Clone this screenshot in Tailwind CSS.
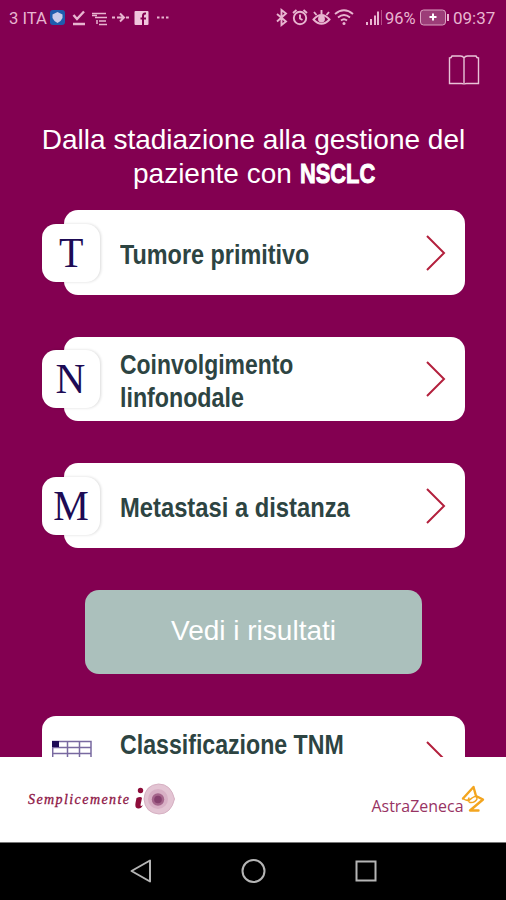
<!DOCTYPE html>
<html lang="it">
<head>
<meta charset="utf-8">
<title>TNM</title>
<script src="https://cdn.jsdelivr.net/npm/@tailwindcss/browser@4"></script>
</head>
<body class="w-[506px] h-[900px] overflow-hidden bg-[#830051] font-['Liberation_Sans',sans-serif] flex flex-col">
<main class="h-[757px] shrink-0 overflow-hidden">
  <header class="h-9 flex items-center text-[#e8b5d0] font-['Roboto',sans-serif] text-[17px] leading-none">
    <span class="ml-[9px] w-[39px] whitespace-nowrap"><span class="inline-block origin-left scale-x-[.98]">3 ITA</span></span>
    <svg class="w-[125px] h-9" viewBox="48 0 125 36" fill="none" stroke="#e8b5d0" stroke-width="2">
      <rect x="50" y="10" width="15" height="15" rx="3" fill="#1e5cae" stroke="none"/><path d="M52.500 14.500L57.500 12L62.500 14.500V18Q61 21.500 57.500 23Q54 21.500 52.500 18Z" fill="#c9cbea" stroke="none"/>
      <path d="M73.500 15L77 19L84 11.500M73 24H85" stroke-width="2.400"/>
      <path d="M92 13.500H106M95 17.500H107M92 15.500H97M99 21H106M99 24.500H107M97 20V24" stroke-width="1.500"/>
      <path d="M112 17.500H115M117 17.500H124M126 17.500H129M120 13.500L124 17.500L120 21.500"/>
      <rect x="134.500" y="11" width="14" height="14" rx="1" fill="#f0c5dc" stroke="none"/><path d="M146 13.500H145Q143 13.500 143 16V25M140.500 18.500H146" stroke="#830051"/>
      <path d="M157 17.500H159.500M161.500 17.500H164M166 17.500H168.500"/>
    </svg>
    <svg class="ml-[102px] w-[108px] h-9" viewBox="275 0 108 36" fill="none" stroke="#e8b5d0" stroke-width="1.900">
      <path d="M277 14L286 21.500L281.500 25V10L286 13.500L277 21.500"/>
      <circle cx="300" cy="18" r="6.200"/><path d="M300 14.500V18.500L302.500 20M293 13L296.500 10M307 13L303.500 10"/>
      <path d="M313.500 19.500Q321.500 10.500 329.500 19.500Q321.500 28 313.500 19.500ZM314 12L316.500 15M321.500 10V14M329 12L326.500 15"/><circle cx="321.500" cy="19" r="2.500" fill="#e8b5d0"/>
      <path d="M335 14Q344 6.500 353 14M338 17.500Q344 12.500 350 17.500M341 20.500Q344 18 347 20.500"/><circle cx="344" cy="23.500" r="1.500" fill="#e8b5d0" stroke="none"/>
      <path d="M367 25V22M371 25V19M375 25V15.500M378 25V11.500" stroke-width="2"/><path d="M381.500 25V10" stroke="#b34d87" stroke-width="1"/>
    </svg>
    <span class="ml-[2px] w-[35px] text-[17px] whitespace-nowrap"><span class="inline-block origin-left scale-x-[.97]">96%</span></span>
    <svg class="w-[30px] h-9" viewBox="420 0 30 36"><rect x="420.500" y="10" width="25" height="15" rx="3" fill="#9c3d78" stroke="#dba3c2"/><path d="M448 14V21" stroke="#e8b5d0" stroke-width="2"/><path d="M433 13.500V20.500M429.500 17H436.500" stroke="#fff" stroke-width="2"/></svg>
    <span class="ml-[3px] whitespace-nowrap">09:37</span>
  </header>
  <div class="h-[87px] flex justify-end pr-[26px] pt-[17px]">
    <svg class="w-8 h-8" viewBox="448 53 32 32" fill="none" stroke="#e9c3d8" stroke-width="1.400"><path d="M464 58Q463 56 460.500 56H452Q451.500 58 449.500 58V83.500H461.500Q464 83.500 464 84.500Q464 83.500 466.500 83.500H478.500V58Q476.500 58 476 56H467.500Q465 56 464 58ZM464 58V83"/></svg>
  </div>
  <h1 class="h-[87px] text-center text-white text-[28px] leading-[33.500px]">
    <div class="whitespace-nowrap w-[506px] pl-px">Dalla stadiazione alla gestione del</div>
    <div class="whitespace-nowrap pl-[133px] text-left flex"><span>paziente con&nbsp;</span><span class="font-bold origin-left scale-x-[.78] [-webkit-text-stroke:1px_white]">NSCLC</span></div>
  </h1>
  <section class="pl-[42px] flex flex-col gap-[42px] text-[#2d4442] text-[27px] font-bold leading-[33px]">
    <div class="relative ml-[22px] w-[401px] h-[85px] rounded-[14px] bg-white flex items-center">
      <div class="-ml-[22px] w-[58px] h-[58px] rounded-[14px] bg-white shadow-[1px_0_3px_rgba(0,0,0,.15)] flex items-center justify-center pb-px text-[#1d0b55] font-normal text-[43px] leading-none font-['Liberation_Serif',serif]"><span class="scale-x-[.93]">T</span></div>
      <div class="ml-5 w-[300px] pt-[5px] whitespace-nowrap"><span class="inline-block origin-left scale-x-[.866]">Tumore primitivo</span></div>
      <svg class="w-6 h-10 ml-[5px]" viewBox="0 0 24 40" fill="none" stroke="#b3203d" stroke-width="2"><path d="M2 3L19 20L2 37"/></svg>
    </div>
    <div class="relative ml-[22px] w-[401px] h-[84px] rounded-[14px] bg-white flex items-center">
      <div class="-ml-[22px] w-[58px] h-[58px] rounded-[14px] bg-white shadow-[1px_0_3px_rgba(0,0,0,.15)] flex items-center justify-center pb-px text-[#1d0b55] font-normal text-[43px] leading-none font-['Liberation_Serif',serif]"><span class="scale-x-[.96]">N</span></div>
      <div class="ml-5 w-[300px] pt-[5px] whitespace-nowrap"><span class="inline-block origin-left scale-x-[.85]">Coinvolgimento</span><br><span class="inline-block origin-left scale-x-[.86]">linfonodale</span></div>
      <svg class="w-6 h-10 ml-[5px]" viewBox="0 0 24 40" fill="none" stroke="#b3203d" stroke-width="2"><path d="M2 3L19 20L2 37"/></svg>
    </div>
    <div class="relative ml-[22px] w-[401px] h-[85px] rounded-[14px] bg-white flex items-center">
      <div class="-ml-[22px] w-[58px] h-[58px] rounded-[14px] bg-white shadow-[1px_0_3px_rgba(0,0,0,.15)] flex items-center justify-center pb-px text-[#1d0b55] font-normal text-[43px] leading-none font-['Liberation_Serif',serif]"><span class="scale-x-[.93]">M</span></div>
      <div class="ml-5 w-[300px] pt-[5px] whitespace-nowrap"><span class="inline-block origin-left scale-x-[.88]">Metastasi a distanza</span></div>
      <svg class="w-6 h-10 ml-[5px]" viewBox="0 0 24 40" fill="none" stroke="#b3203d" stroke-width="2"><path d="M2 3L19 20L2 37"/></svg>
    </div>
    <button class="ml-[43px] w-[337px] h-[84px] rounded-[14px] bg-[#abc0bc] pb-[3px] text-white text-[28px] font-normal">Vedi i risultati</button>
    <div class="w-[423px] h-[85px] rounded-[14px] bg-white flex items-start">
      <svg class="ml-[10px] mt-[24px] w-10 h-[30px]" viewBox="0 0 40 30" fill="none" stroke="#7869a0" stroke-width="1.500"><path d="M0 1.500H39V28H0ZM0 7.500H39M0 13.500H39M15.500 1V28M27.500 1V28M.7 1V28"/><path d="M0 1H7V7H0Z" fill="#1d0b55" stroke="none"/></svg>
      <div class="ml-7 w-[300px] mt-[17px] leading-[24px] whitespace-nowrap"><span class="inline-block h-6 origin-left scale-x-[.857]">Classificazione TNM</span></div>
      <svg class="w-6 h-10 ml-[5px] mt-[23px]" viewBox="0 0 24 40" fill="none" stroke="#b3203d" stroke-width="2"><path d="M2 3L19 20L2 37"/></svg>
    </div>
  </section>
</main>
<footer class="h-[85px] shrink-0 bg-white flex justify-between">
  <svg class="w-[190px] h-[85px]" viewBox="0 757 190 85">
    <text x="28" y="804" textLength="101" lengthAdjust="spacing" font-family="Liberation Serif, serif" font-style="italic" font-size="14" fill="#8d1444" stroke="#8d1444" stroke-width=".3">Semplicemente</text>
    <circle cx="140.500" cy="790.500" r="2.700" fill="#8d0d3a"/><path d="M136.500 798Q141 796 142 798L140.500 805Q140.500 807 143 805Q141 809 138 808.500Q134.500 808 135.500 803Z" fill="#8d0d3a"/>
    <path d="M158.500 784Q171 784 174.500 799Q171 814 159 814Q145 813 144 799Q145 785 158.500 784Z" fill="#e3c4d3" stroke="#d6b0c2"/><circle cx="158" cy="799" r="10" fill="#d8b0c5"/><circle cx="158" cy="799.500" r="6.200" fill="#a5658b"/><circle cx="158" cy="799.500" r="3.800" fill="#86416e"/>
  </svg>
  <svg class="w-[156px] h-[85px]" viewBox="350 757 156 85">
    <text x="371.500" y="812" textLength="92" lengthAdjust="spacingAndGlyphs" font-family="Open Sans, sans-serif" font-size="16.500" fill="#983363">AstraZeneca</text>
    <g fill="none" stroke="#f3a51f" stroke-linejoin="round" stroke-linecap="round"><path d="M463 798.500L473.500 787L476 796L483 799.500L470 810.500H478.500" stroke-width="2.400"/><path d="M463 798.500Q468 802.500 472 798Q477 794.500 477 799Q475 803 470 802.500Q467 801 469 798" stroke-width="1.500"/></g>
  </svg>
</footer>
<nav class="h-[58px] shrink-0 bg-black border-t border-[#777]">
  <svg class="w-[506px] h-[57px]" viewBox="0 843 506 57" fill="none" stroke="#b5b5b5" stroke-width="2"><path d="M131.500 871L150 860.500V881.500Z" stroke-linejoin="round"/><circle cx="253.500" cy="871" r="11"/><rect x="356.500" y="861.500" width="19" height="19"/></svg>
</nav>
</body>
</html>
